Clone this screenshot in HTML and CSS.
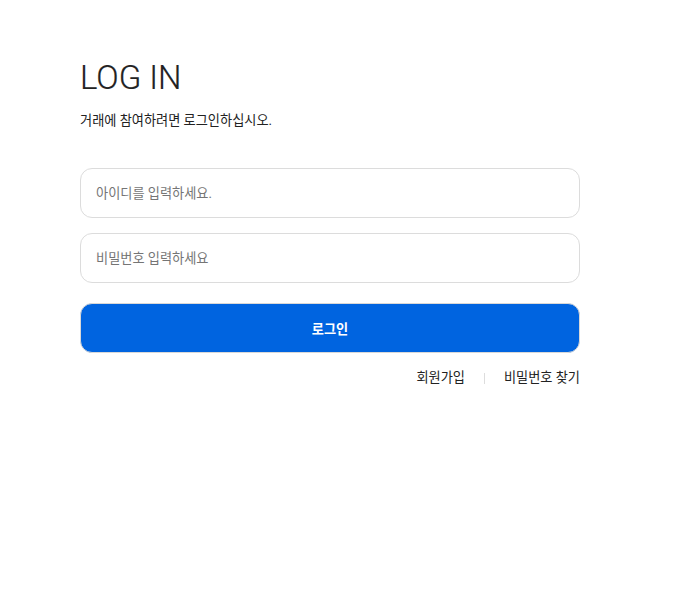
FILE: index.html
```html
<!DOCTYPE html>
<html lang="ko">
<head>
<meta charset="utf-8">
<title>LOG IN</title>
<link rel="stylesheet" href="styles.css">
</head>
<body>
<main class="login">
  <h1 class="title">LOG IN</h1>
  <p class="desc">거래에 참여하려면 로그인하십시오.</p>
  <form class="form">
    <input class="field" type="text" placeholder="아이디를 입력하세요.">
    <input class="field" type="password" placeholder="비밀번호 입력하세요">
    <button class="submit" type="button">로그인</button>
  </form>
  <nav class="links">
    <a href="#" class="link">회원가입</a>
    <span class="sep"></span>
    <a href="#" class="link">비밀번호 찾기</a>
  </nav>
</main>
</body>
</html>
```

FILE: styles.css
```css
* { box-sizing: border-box; }
html, body { margin: 0; background: #fff; }
body {
  font-family: Roboto, "Noto Sans CJK KR", sans-serif;
  color: #222;
}
.login {
  width: 500px;
  margin-left: 80px;
  padding-top: 56px;
}
.title {
  margin: 0;
  font-size: 33px;
  font-weight: 300;
  line-height: 44px;
  color: #222;
  -webkit-text-stroke: 0.2px #222;
}
.desc {
  margin: 11px 0 0;
  font-size: 13.2px;
  line-height: 20px;
  color: #222;
}
.form {
  margin-top: 37px;
  display: flex;
  flex-direction: column;
  gap: 15px;
}
.field {
  height: 50px;
  width: 100%;
  border: 1px solid #dcdcdc;
  border-radius: 12px;
  padding: 0 15px;
  font-family: inherit;
  font-size: 13.2px;
  color: #222;
  outline: none;
}
.field::placeholder { color: #757575; }
.submit {
  margin-top: 5px;
  height: 50px;
  width: 100%;
  border: 1px solid #d8d8d8;
  border-radius: 12px;
  background: #0064e0;
  color: #fff;
  font-family: inherit;
  font-size: 13.2px;
  font-weight: 700;
  cursor: pointer;
}
.links {
  margin-top: 15px;
  display: flex;
  justify-content: flex-end;
  align-items: center;
  gap: 19px;
}
.link {
  font-size: 13.2px;
  line-height: 20px;
  color: #222;
  text-decoration: none;
}
.sep {
  width: 1px;
  height: 11px;
  background: #ddd;
}
```
